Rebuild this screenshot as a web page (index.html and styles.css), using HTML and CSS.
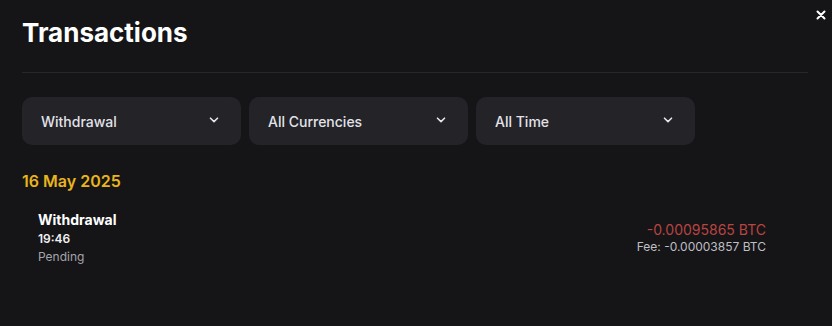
FILE: index.html
```html
<!DOCTYPE html>
<html>
<head>
<meta charset="utf-8">
<link rel="stylesheet" href="styles.css">
</head>
<body>
<div class="modal">
  <button class="close" aria-label="Close">
    <svg width="10" height="10" viewBox="0 0 10 10"><path d="M1.5 1.5L8.5 8.5M8.5 1.5L1.5 8.5" stroke="#fff" stroke-width="2" stroke-linecap="round"/></svg>
  </button>
  <h1 class="title">Transactions</h1>
  <div class="divider"></div>
  <div class="filters">
    <div class="select"><span>Withdrawal</span><svg class="chev" width="10" height="6" viewBox="0 0 10 6"><path d="M1.5 1.2L5 4.6L8.5 1.2" fill="none" stroke="#e6e6ea" stroke-width="1.6" stroke-linecap="round" stroke-linejoin="round"/></svg></div>
    <div class="select"><span>All Currencies</span><svg class="chev" width="10" height="6" viewBox="0 0 10 6"><path d="M1.5 1.2L5 4.6L8.5 1.2" fill="none" stroke="#e6e6ea" stroke-width="1.6" stroke-linecap="round" stroke-linejoin="round"/></svg></div>
    <div class="select"><span>All Time</span><svg class="chev" width="10" height="6" viewBox="0 0 10 6"><path d="M1.5 1.2L5 4.6L8.5 1.2" fill="none" stroke="#e6e6ea" stroke-width="1.6" stroke-linecap="round" stroke-linejoin="round"/></svg></div>
  </div>
  <div class="date">16 May 2025</div>
  <div class="tx">
    <div class="tx-left">
      <div class="tx-type">Withdrawal</div>
      <div class="tx-time">19:46</div>
      <div class="tx-status">Pending</div>
    </div>
    <div class="tx-right">
      <div class="tx-amount">-0.00095865 BTC</div>
      <div class="tx-fee">Fee: -0.00003857 BTC</div>
    </div>
  </div>
</div>
</body>
</html>
```
FILE: styles.css
```css
* { box-sizing: border-box; }
html, body {
  margin: 0;
  padding: 0;
  background: #151518;
  width: 832px;
  height: 326px;
  overflow: hidden;
}
body {
  font-family: Inter, "Noto Sans", sans-serif;
  color: #fff;
}
.modal {
  position: relative;
  padding: 15px 24px 0 22px;
}
.close {
  position: absolute;
  top: 10px;
  right: 6px;
  width: 10px;
  height: 10px;
  padding: 0;
  border: 0;
  background: none;
  display: flex;
}
.title {
  margin: 0;
  font-size: 26px;
  font-weight: 700;
  line-height: 36px;
}
.divider {
  margin-top: 21px;
  height: 1px;
  background: #26262b;
}
.filters {
  display: flex;
  gap: 8px;
  margin-top: 24px;
}
.select {
  width: 219px;
  height: 48px;
  background: #232328;
  border-radius: 10px;
  display: flex;
  align-items: center;
  justify-content: space-between;
  padding: 0 22px 0 19px;
  font-size: 14px;
  font-weight: 500;
  color: #e2e2e8;
}
.chev { margin-top: -2px; }
.date {
  margin-top: 26px;
  font-size: 16px;
  font-weight: 600;
  color: #e9b51c;
  line-height: 20px;
}
.tx {
  display: flex;
  justify-content: space-between;
  padding: 19px 42px 0 16px;
}
.tx-type {
  font-size: 14px;
  font-weight: 700;
  line-height: 20px;
}
.tx-time {
  font-size: 12px;
  font-weight: 600;
  line-height: 18px;
  color: #f0f0f2;
}
.tx-status {
  font-size: 12px;
  line-height: 18px;
  color: #a4a4aa;
}
.tx-right {
  text-align: right;
  padding-top: 10px;
}
.tx-amount {
  font-size: 14px;
  color: #b94440;
  line-height: 19px;
}
.tx-fee {
  font-size: 12px;
  color: #bfbfc4;
  line-height: 16px;
}
```
